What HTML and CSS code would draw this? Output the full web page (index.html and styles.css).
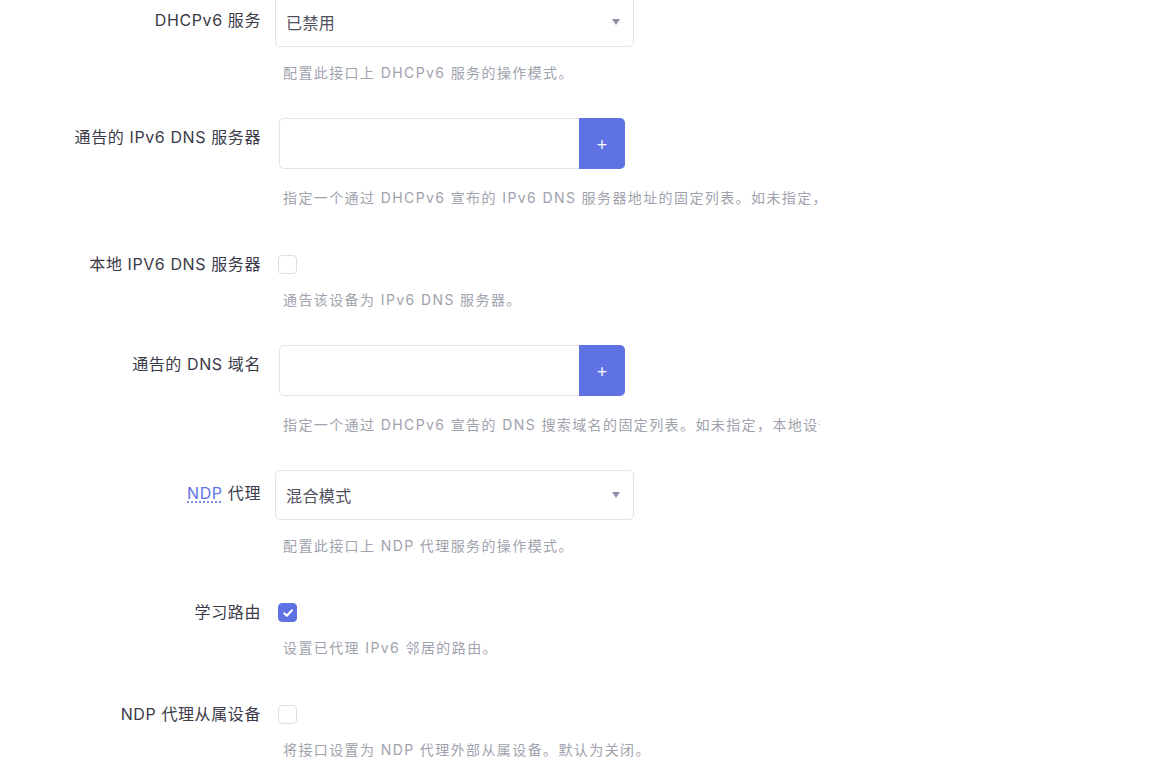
FILE: index.html
```html
<!DOCTYPE html>
<html lang="zh-CN">
<head>
    <meta charset="UTF-8">
    <meta name="viewport" content="width=device-width, initial-scale=1.0">
    <title>DHCPv6 设置</title>
    <link rel="stylesheet" href="styles.css">
</head>
<body>
    <div class="form">
        <div class="row row-select">
            <label class="row-label">DHCPv6 服务</label>
            <div class="row-field">
                <div class="select"><span>已禁用</span><span class="caret"></span></div>
                <div class="desc">配置此接口上 DHCPv6 服务的操作模式。</div>
            </div>
        </div>

        <div class="row row-input">
            <label class="row-label">通告的 IPv6 DNS 服务器</label>
            <div class="row-field">
                <div class="input-group">
                    <input type="text" class="text-input">
                    <button class="add-btn" type="button">+</button>
                </div>
                <div class="desc">指定一个通过 DHCPv6 宣布的 IPv6 DNS 服务器地址的固定列表。如未指定，则设备会将自己作为 IPv6 DNS 服务器通告</div>
            </div>
        </div>

        <div class="row row-check">
            <label class="row-label">本地 IPV6 DNS 服务器</label>
            <div class="row-field">
                <span class="checkbox"></span>
                <div class="desc">通告该设备为 IPv6 DNS 服务器。</div>
            </div>
        </div>

        <div class="row row-input">
            <label class="row-label">通告的 DNS 域名</label>
            <div class="row-field">
                <div class="input-group">
                    <input type="text" class="text-input">
                    <button class="add-btn" type="button">+</button>
                </div>
                <div class="desc">指定一个通过 DHCPv6 宣告的 DNS 搜索域名的固定列表。如未指定，本地设备的 DNS 搜索域将被通告</div>
            </div>
        </div>

        <div class="row row-select">
            <label class="row-label"><abbr class="abbr">NDP</abbr> 代理</label>
            <div class="row-field">
                <div class="select"><span>混合模式</span><span class="caret"></span></div>
                <div class="desc">配置此接口上 NDP 代理服务的操作模式。</div>
            </div>
        </div>

        <div class="row row-check">
            <label class="row-label">学习路由</label>
            <div class="row-field">
                <span class="checkbox checked">
                    <svg width="12" height="12" viewBox="0 0 12 12"><path d="M2.2 6.3 4.8 8.8 9.8 3.4" fill="none" stroke="#fff" stroke-width="2.2" stroke-linecap="round" stroke-linejoin="round"/></svg>
                </span>
                <div class="desc">设置已代理 IPv6 邻居的路由。</div>
            </div>
        </div>

        <div class="row row-check">
            <label class="row-label">NDP 代理从属设备</label>
            <div class="row-field">
                <span class="checkbox"></span>
                <div class="desc">将接口设置为 NDP 代理外部从属设备。默认为关闭。</div>
            </div>
        </div>
    </div>
</body>
</html>
```

FILE: styles.css
```css
body {
    margin: 0;
    background: #fff;
    font-family: Inter, "Noto Sans CJK SC", sans-serif;
    color: #3a3a48;
}
.form {
    margin-top: -3px;
}
.row {
    display: grid;
    grid-template-columns: 261px 1fr;
    column-gap: 14px;
    margin-bottom: 35px;
}
.row-label {
    text-align: right;
    font-size: 16px;
    line-height: 24px;
    letter-spacing: 0.6px;
    color: #3a3a48;
}
.row-select .row-label {
    padding-top: 11px;
}
.row-input .row-label {
    padding-top: 7px;
}
.row-check {
    padding-top: 12px;
}
.row-check .row-label {
    line-height: 19px;
}
.abbr {
    color: #5e72e4;
    text-decoration: underline dotted;
    text-underline-offset: 3px;
}
.select {
    width: 359px;
    height: 50px;
    box-sizing: border-box;
    border: 1px solid #e3e3e6;
    border-radius: 5px;
    padding: 0 13px 0 10px;
    display: flex;
    align-items: center;
    justify-content: space-between;
    font-size: 16px;
    letter-spacing: 0.4px;
    color: #50505c;
}
.caret {
    width: 0;
    height: 0;
    border-left: 4px solid transparent;
    border-right: 4px solid transparent;
    border-top: 6px solid #8a93a6;
}
.input-group {
    display: flex;
    margin-left: 4px;
    height: 51px;
}
.text-input {
    width: 300px;
    box-sizing: border-box;
    border: 1px solid #e3e3e6;
    border-right: none;
    border-radius: 5px 0 0 5px;
    margin: 0;
    font-size: 16px;
}
.add-btn {
    width: 46px;
    border: none;
    border-radius: 0 5px 5px 0;
    background: #5e72e4;
    color: #fff;
    font-family: Inter, sans-serif;
    font-size: 19px;
    font-weight: 300;
    padding: 0;
}
.checkbox {
    display: flex;
    align-items: center;
    justify-content: center;
    width: 19px;
    height: 19px;
    box-sizing: border-box;
    margin-left: 3px;
    border: 1px solid #dedee2;
    border-radius: 4px;
}
.checkbox.checked {
    background: #5e72e4;
    border-color: #5e72e4;
}
.desc {
    margin: 16px 0 0 8px;
    max-width: 537px;
    overflow: hidden;
    white-space: nowrap;
    font-size: 14px;
    line-height: 20px;
    letter-spacing: 1.4px;
    color: #a0a2ad;
}
.row-input .desc {
    margin-top: 19px;
}
```
